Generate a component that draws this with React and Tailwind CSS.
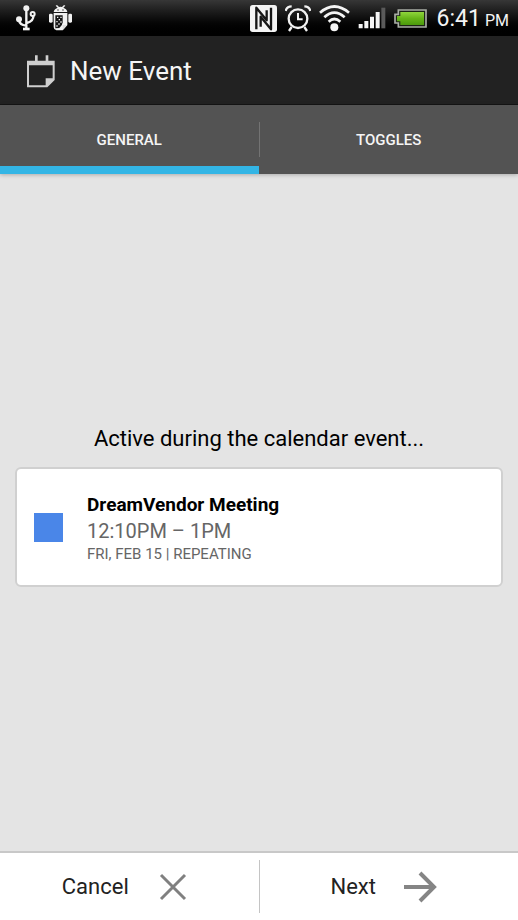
import React, { useState } from "react";

function UsbIcon() {
  return (
    <svg className="h-[26px] w-5" viewBox="0 0 60 78" fill="none" stroke="#f2f2f2" strokeWidth="7" aria-hidden="true">
      <circle cx="31" cy="10" r="9" fill="#f2f2f2" stroke="none" />
      <path d="M31 10V72M9 44C10 56 20 61 30 62M52 32C53 44 44 51 32 54" />
      <circle cx="9" cy="43" r="9" fill="#f2f2f2" stroke="none" />
      <circle cx="50" cy="27" r="6" strokeWidth="6" />
      <rect x="21" y="68" width="20" height="8" fill="#f2f2f2" stroke="none" />
    </svg>
  );
}

function AndroidIcon() {
  return (
    <svg className="h-[26px] w-[23px]" viewBox="0 0 69 78" fill="#f2f2f2" aria-hidden="true">
      <path d="M14 21C15 14 20 10 26 8L20 2L24 0L30 6Q34 5 39 6L45 0L49 2L43 8C49 10 54 14 55 21Z" />
      <circle cx="27" cy="15" r="2" fill="#222" />
      <circle cx="42" cy="15" r="2" fill="#222" />
      <rect x="0" y="26" width="11" height="27" rx="4" />
      <rect x="58" y="26" width="11" height="27" rx="4" />
      <path d="M14 24H55V60L41 76H22Q14 74 14 66Z" />
      <path d="M19 31H41V52Q41 61 31 69L19 70Z" fill="#161616" />
      <path d="M24 35h4v4h-4zM34 35h4v4h-4zM29 42h4v4h-4zM22 48h4v4h-4zM34 49h4v4h-4zM28 55h4v4h-4zM22 61h4v4h-4z" />
      <path d="M41 76V60H55Z" fill="#dcdcdc" />
    </svg>
  );
}

function NfcIcon() {
  return (
    <svg className="h-[27px] w-[27px]" viewBox="0 0 81 81" aria-hidden="true">
      <rect width="81" height="81" rx="8" fill="#f4f4f4" />
      <path d="M19 73V8L50 46V16" fill="none" stroke="#161616" strokeWidth="7" strokeLinejoin="round" />
      <path d="M63 8V73L32 35V65" fill="none" stroke="#161616" strokeWidth="7" strokeLinejoin="round" />
    </svg>
  );
}

function AlarmIcon() {
  return (
    <svg className="h-[27px] w-[26px]" viewBox="0 0 78 81" fill="none" stroke="#f2f2f2" strokeWidth="7" aria-hidden="true">
      <circle cx="39" cy="41" r="28" />
      <path d="M39 24V43H53" strokeWidth="6" />
      <path d="M2 18C4 9 10 4 20 4M76 18C74 9 68 4 58 4" strokeWidth="7" />
      <path d="M20 66L12 78M58 66L66 78" strokeWidth="7" />
    </svg>
  );
}

function WifiIcon() {
  return (
    <svg className="h-[27px] w-[31px]" viewBox="0 0 93 81" fill="none" stroke="#f4f4f4" strokeWidth="8" aria-hidden="true">
      <path d="M3 23Q46 -14 90 23M16 37Q46 9 77 37M29 50Q46 34 64 50" />
      <circle cx="46" cy="67" r="12" fill="#f4f4f4" stroke="none" />
    </svg>
  );
}

function SignalIcon() {
  return (
    <svg className="h-[22px] w-7" viewBox="0 0 84 66" fill="#f4f4f4" aria-hidden="true">
      <path d="M2 51h12v13H2zM19 42h12v22H19zM36 29h12v35H36zM53 15h12v49H53z" />
      <path d="M70 2h12v62H70z" fill="#5a5a5a" />
    </svg>
  );
}

function BatteryIcon() {
  return (
    <svg className="h-[19px] w-[33px]" viewBox="0 0 99 57" aria-hidden="true">
      <defs>
        <linearGradient id="charge" x2="0" y2="1">
          <stop offset="0" stopColor="#8fd63c" />
          <stop offset="0.5" stopColor="#66b518" />
          <stop offset="1" stopColor="#4b9a0c" />
        </linearGradient>
      </defs>
      <path d="M13 3H96V54H13V42H3V16H13Z" fill="#1c2415" stroke="#a9ada6" strokeWidth="5" />
      <path d="M19 9H90V48H19V37H9V21H19Z" fill="url(#charge)" />
    </svg>
  );
}

function CalendarIcon() {
  return (
    <svg className="h-[33px] w-7" viewBox="0 0 84 99" aria-hidden="true">
      <path
        d="M0 17H24V1H32V17H56V1H64V17H83V75L61 97H0ZM6 31V91H56V70H77V31Z"
        fill="#cfcfcf"
        fillRule="evenodd"
      />
    </svg>
  );
}

function CloseIcon() {
  return (
    <svg className="size-7" viewBox="0 0 28 28" fill="none" stroke="#808080" strokeWidth="3" aria-hidden="true">
      <path d="M2 2L26 26M26 2L2 26" />
    </svg>
  );
}

function ArrowIcon() {
  return (
    <svg className="h-8 w-[33px]" viewBox="0 0 33 32" fill="none" stroke="#858585" strokeWidth="4" aria-hidden="true">
      <path d="M0 16H30M16 2L30 16L16 30" />
    </svg>
  );
}

function Tab({ label, active, onSelect }) {
  return (
    <button
      type="button"
      role="tab"
      aria-selected={active}
      onClick={onSelect}
      className={
        "flex-1 border-y-8 border-t-transparent pt-0.5 text-[15px] font-medium text-[#f5f5f5] " +
        (active ? "border-b-[#33b5e5]" : "border-b-transparent")
      }
    >
      {label}
    </button>
  );
}

export default function App() {
  const [tab, setTab] = useState("general");

  return (
    <div className="flex min-h-screen flex-col bg-[#e4e4e4] font-['Roboto',sans-serif] text-black">
      <div className="flex h-9 items-center justify-between bg-linear-to-b from-[#373737] to-black pr-[9px] pl-4 text-[#f4f4f4]">
        <div className="flex items-center gap-[13px]">
          <UsbIcon />
          <AndroidIcon />
        </div>
        <div className="flex items-center gap-2">
          <NfcIcon />
          <AlarmIcon />
          <WifiIcon />
          <SignalIcon />
          <BatteryIcon />
          <span className="ml-0.5 flex items-baseline gap-1 pt-0.5 text-[23px]">
            6:41 <span className="text-base">PM</span>
          </span>
        </div>
      </div>

      <header className="flex h-[69px] items-center gap-[15px] border-b border-[#151515] bg-[#222] pt-0.5 pl-[27px] text-[#f5f5f5]">
        <CalendarIcon />
        <h1 className="text-[26px]">New Event</h1>
      </header>

      <div role="tablist" className="flex h-[69px] bg-[#535353] shadow-[0_1px_4px_rgba(0,0,0,0.25)]">
        <Tab label="GENERAL" active={tab === "general"} onSelect={() => setTab("general")} />
        <div className="my-[17px] w-px bg-[#737373]" />
        <Tab label="TOGGLES" active={tab === "toggles"} onSelect={() => setTab("toggles")} />
      </div>

      <main className="flex flex-1 flex-col justify-center px-[15px] pb-4">
        <p className="mb-3 text-center text-[22px] leading-8">Active during the calendar event...</p>
        <button
          type="button"
          className="flex items-center gap-6 rounded-md border-2 border-[#d0d0d0] bg-white pt-[22px] pb-5 pl-[17px] text-left"
        >
          <span className="size-[29px] bg-[#4a86e8]" />
          <span className="flex flex-col">
            <span className="text-[19px] leading-7 font-bold">DreamVendor Meeting</span>
            <span className="text-xl leading-6 text-[#666]">12:10PM – 1PM</span>
            <span className="text-[15px] leading-[22px] text-[#666]">FRI, FEB 15 | REPEATING</span>
          </span>
        </button>
      </main>

      <footer className="flex h-[69px] border-t-2 border-[#c8c8c8] bg-white text-[22px] text-[#222]">
        <button type="button" className="flex flex-1 items-center justify-center gap-[30px] pr-2.5">
          Cancel
          <CloseIcon />
        </button>
        <div className="my-[7px] w-px bg-[#c4c4c4]" />
        <button type="button" className="flex flex-1 items-center justify-center gap-7 pr-2.5">
          Next
          <ArrowIcon />
        </button>
      </footer>
    </div>
  );
}
